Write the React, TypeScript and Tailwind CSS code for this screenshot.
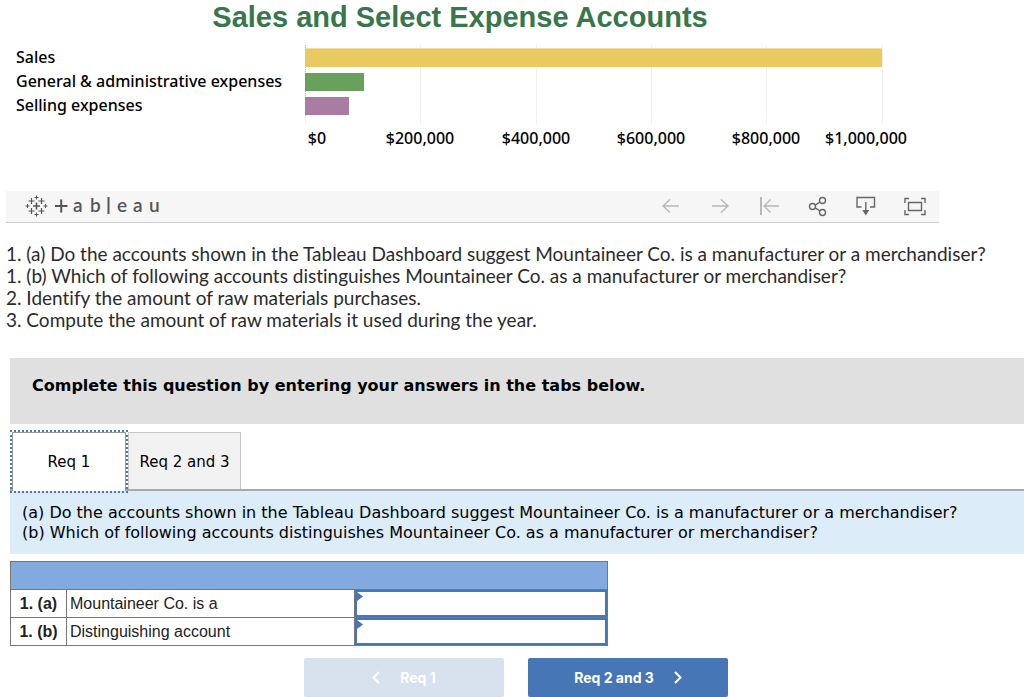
import type { ReactNode } from "react";

const chartFont = "font-['Noto_Sans',sans-serif] font-medium";

const accounts = [
  { name: "Sales", y: 4, width: 577, color: "#e8ca60" },
  { name: "General & administrative expenses", y: 28, width: 59, color: "#69a05b" },
  { name: "Selling expenses", y: 52, width: 44, color: "#a97ca1" },
];

const ticks = [
  { x: 0, labelX: 12, label: "$0" },
  { x: 115, labelX: 115, label: "$200,000" },
  { x: 231, labelX: 231, label: "$400,000" },
  { x: 346, labelX: 346, label: "$600,000" },
  { x: 461, labelX: 461, label: "$800,000" },
  { x: 577, labelX: 561, label: "$1,000,000" },
];

const questions = [
  "1. (a) Do the accounts shown in the Tableau Dashboard suggest Mountaineer Co. is a manufacturer or a merchandiser?",
  "1. (b) Which of following accounts distinguishes Mountaineer Co. as a manufacturer or merchandiser?",
  "2. Identify the amount of raw materials purchases.",
  "3. Compute the amount of raw materials it used during the year.",
];

const rows = [
  { id: "answer-a", number: "1. (a)", label: "Mountaineer Co. is a" },
  { id: "answer-b", number: "1. (b)", label: "Distinguishing account" },
];

function Chart() {
  return (
    <section className="max-w-[920px]">
      <h1 className="h-[45px] text-center font-['Liberation_Sans',sans-serif] text-[29px] leading-[34px] font-bold text-[#38764c]">
        Sales and Select Expense Accounts
      </h1>
      <div className="flex pl-4">
        <ul className={`w-[289px] shrink-0 text-base leading-6 whitespace-nowrap text-black ${chartFont}`}>
          {accounts.map((a) => (
            <li key={a.name}>{a.name}</li>
          ))}
        </ul>
        <svg width="615" height="106" className={`shrink-0 ${chartFont}`} role="img" aria-label="Expense chart">
          {ticks.map((t) => (
            <g key={t.label}>
              <path d={`M${t.x + 0.5} 0V73M${t.x + 0.5} 74V79`} stroke="#f0f0f0" />
              <text x={t.labelX} y="99" textAnchor="middle" fontSize="16" fill="#000">
                {t.label}
              </text>
            </g>
          ))}
          <path d="M0.5 0V72" stroke="#b8b8b8" strokeDasharray="1 1" />
          {accounts.map((a) => (
            <rect key={a.name} x="0" y={a.y} width={a.width} height="18" fill={a.color} />
          ))}
          <path d="M0 3.5H577" stroke="#f1dfa0" />
        </svg>
      </div>
    </section>
  );
}

function TableauLogo() {
  return (
    <a href="#tableau" aria-label="Tableau" className="flex">
      <svg width="140" height="30" viewBox="0 -3 140 30" fill="none" stroke="#555" strokeWidth="1.2">
        <path strokeWidth="1.6" d="M8 11h7M11.500 7.500v7" />
        <path d="M3.500 6h6M6.500 3v6M13.500 6h6M16.500 3v6M3.500 16h6M6.500 13v6M13.500 16h6M16.500 13v6" />
        <path strokeWidth="1" d="M9.500 2.500h4M11.500 0.500v4M9.500 19.500h4M11.500 17.500v4M0.500 11h4M2.500 9v4M18.500 11h4M20.500 9v4" />
        <path strokeWidth="2" d="M30 11h12.500M36.200 4.500v13M83.500 2v17" />
        <g fill="#555" stroke="none" fontFamily="Lato" fontSize="19" fontWeight="600">
          <text x="48" y="17">a</text>
          <text x="65" y="17">b</text>
          <text x="92" y="17">e</text>
          <text x="108" y="17">a</text>
          <text x="124" y="17">u</text>
        </g>
      </svg>
    </a>
  );
}

function ToolButton({ label, muted, children }: { label: string; muted?: boolean; children: ReactNode }) {
  return (
    <button aria-label={label} className={muted ? "text-[#b8b8b8]" : "text-[#666]"}>
      <svg width="24" height="24" fill="none" stroke="currentColor" strokeWidth="1.4">
        {children}
      </svg>
    </button>
  );
}

function Toolbar() {
  return (
    <div className="ml-1.5 flex h-8 max-w-[933px] items-center justify-between border-b border-[#cfcfcf] bg-[#f6f6f6] pr-3 pl-[19px]">
      <TableauLogo />
      <div className="flex gap-[25px]">
        <ToolButton label="Undo" muted>
          <path d="M21 11H5M12 4.500L5 11l7 6.500" />
        </ToolButton>
        <ToolButton label="Redo" muted>
          <path d="M5 11h16M14 4.500L21 11l-7 6.500" />
        </ToolButton>
        <ToolButton label="Revert" muted>
          <path d="M23 11H8M14.500 4.500L8 11l6.500 6.500" />
          <path d="M5 2v18" strokeWidth="2" />
        </ToolButton>
        <ToolButton label="Share">
          <circle cx="7.500" cy="11.500" r="3" />
          <circle cx="17.500" cy="5.500" r="3" />
          <circle cx="17.500" cy="17.500" r="3" />
          <path d="M10.200 10.200L15 7M10.200 12.800L15 16" />
        </ToolButton>
        <ToolButton label="Download">
          <path d="M7.500 12H3V2.500H20.500V12H16M11.800 7v9" />
          <path d="M8.300 15h7L11.800 20.500z" fill="currentColor" stroke="none" />
        </ToolButton>
        <ToolButton label="Full screen">
          <path d="M6 3.500H2V8M18 3.500h4V8M6 19.500H2V15M18 19.500h4V15" />
          <path d="M5.500 7.500h13v8h-13z" />
        </ToolButton>
      </div>
    </div>
  );
}

function Tabs() {
  return (
    <div role="tablist" className="mt-2 flex h-[59px] gap-0.5 border-b-2 border-[#a9a9a9] pl-0.5 font-['DejaVu_Sans',sans-serif] text-[15px] text-black">
      <button
        role="tab"
        aria-selected="true"
        className="h-[59px] w-[114px] border border-b-0 border-[#999] bg-white pt-px outline-2 outline-dotted outline-[#4676b5]"
      >
        Req 1
      </button>
      <button
        role="tab"
        aria-selected="false"
        className="h-[57px] w-[113px] border border-b-0 border-[#c8c8c8] bg-[#f2f2f2] pt-0.5 whitespace-nowrap"
      >
        Req 2 and 3
      </button>
    </div>
  );
}

function AnswerTable() {
  return (
    <table className="mt-[7px] w-full max-w-[598px] table-fixed border-collapse border border-[#777] font-['Liberation_Sans',sans-serif] text-base text-[#222]">
      <colgroup>
        <col className="w-14" />
        <col className="w-[288px]" />
        <col />
      </colgroup>
      <thead>
        <tr className="h-7">
          <th colSpan={3} className="border border-[#777] bg-[#83aadf]" aria-label="Answers" />
        </tr>
      </thead>
      <tbody>
        {rows.map((r) => (
          <tr key={r.id} className="h-7">
            <th className="border border-[#777] p-0 font-bold">{r.number}</th>
            <td className="border border-[#777] px-[3px] py-0">
              <label htmlFor={r.id}>{r.label}</label>
            </td>
            <td className="border border-[#777] p-0">
              <div className="relative">
                <input id={r.id} className="block h-[27px] w-full border-2 border-[#4676b5] bg-white px-2 outline-none" />
                <svg width="6" height="10" className="absolute top-0.5 left-0.5" aria-hidden="true">
                  <path d="M0 0L6 4.500L0 9z" fill="#4676b5" />
                </svg>
              </div>
            </td>
          </tr>
        ))}
      </tbody>
    </table>
  );
}

export default function App() {
  return (
    <main className="overflow-hidden bg-white">
      <Chart />
      <div className="mt-10">
        <Toolbar />
      </div>
      <div className="mt-5 ml-1.5 font-['Lato',sans-serif] text-[19px] leading-[22px] whitespace-nowrap text-[#2b2b2b] [font-variant-ligatures:none]">
        {questions.map((q) => (
          <p key={q}>{q}</p>
        ))}
      </div>
      <section className="mt-[27px] ml-2.5">
        <h2 className="h-[66px] bg-[#e0e0e0] px-[22px] pt-[18px] font-['DejaVu_Sans',sans-serif] text-base leading-5 font-bold text-black">
          Complete this question by entering your answers in the tabs below.
        </h2>
        <Tabs />
        <div className="h-[63px] bg-[#dcecf9] px-3 pt-3 font-['DejaVu_Sans',sans-serif] text-base leading-5 whitespace-nowrap text-black">
          <p>(a) Do the accounts shown in the Tableau Dashboard suggest Mountaineer Co. is a manufacturer or a merchandiser?</p>
          <p>(b) Which of following accounts distinguishes Mountaineer Co. as a manufacturer or merchandiser?</p>
        </div>
        <AnswerTable />
        <nav className="mt-3 flex justify-center gap-6 pr-0.5 font-['Inter',sans-serif] text-sm font-bold text-white">
          <button disabled className="flex h-[39px] w-[200px] items-center justify-center gap-5 rounded-xs bg-[#d8e2ef] pt-px">
            <svg width="8" height="14" fill="none" stroke="currentColor" strokeWidth="2">
              <path d="M7 1L1.500 6.500L7 12" />
            </svg>
            Req 1
          </button>
          <button className="flex h-[39px] w-[200px] items-center justify-center gap-5 rounded-xs bg-[#4676b5] pt-px">
            Req 2 and 3
            <svg width="8" height="14" fill="none" stroke="currentColor" strokeWidth="2">
              <path d="M1 1l5.500 5.500L1 12" />
            </svg>
          </button>
        </nav>
      </section>
    </main>
  );
}
